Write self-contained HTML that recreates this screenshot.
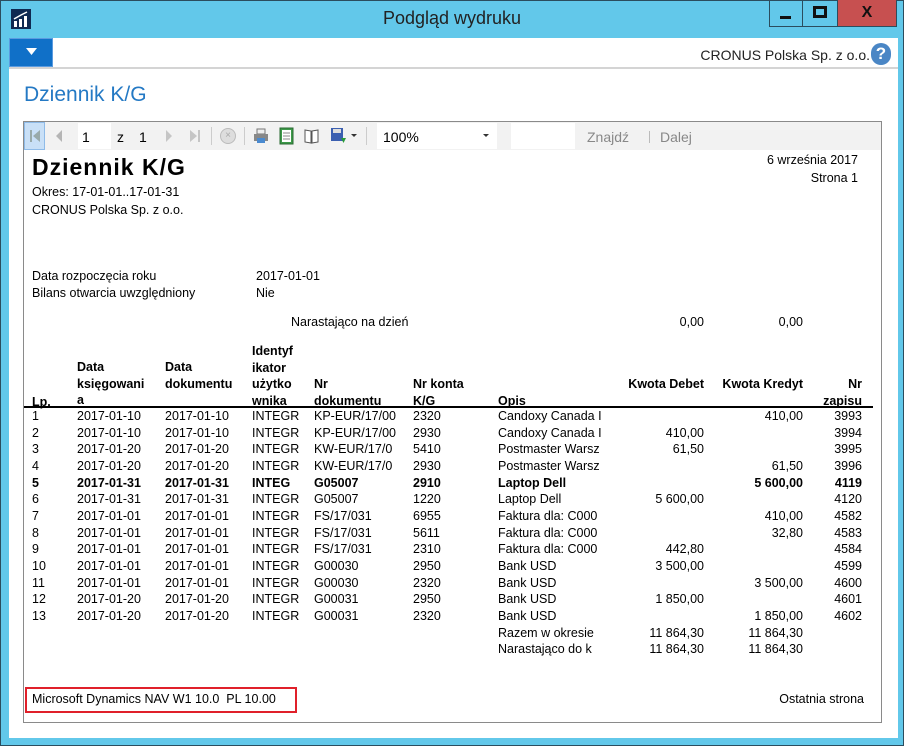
<!DOCTYPE html>
<html><head><meta charset="utf-8">
<style>
*{margin:0;padding:0;box-sizing:border-box}
body{width:904px;height:746px;overflow:hidden;background:#62c8ea;font-family:"Liberation Sans",sans-serif;position:relative;color:#000}
.a{position:absolute;white-space:nowrap}
.r{position:absolute;white-space:nowrap;text-align:right}
.t{font-size:12.5px;line-height:16px}
.b{font-weight:bold}
</style></head><body>
<div class="a" style="left:0;top:0;width:904px;height:746px;border:1px solid #2b4d5e"></div>
<div class="a" style="left:11px;top:9px;width:20px;height:20px;background:#0f2a52"></div>
<svg class="a" style="left:11px;top:9px" width="20" height="20"><rect x="3" y="12" width="3" height="6" fill="#fff"/><rect x="8" y="10" width="3" height="8" fill="#fff"/><rect x="13" y="7" width="3" height="11" fill="#fff"/><path d="M3 10 L10 6 L16 3" stroke="#fff" stroke-width="1.5" fill="none"/></svg>
<div class="a" style="left:0;width:904px;top:8px;text-align:center;font-size:18px;color:#222">Podgląd wydruku</div>
<div class="a" style="left:769px;top:0;width:34px;height:27px;border:1px solid #2b4d5e;border-top:none"></div>
<div class="a" style="left:780px;top:16px;width:11px;height:3px;background:#111"></div>
<div class="a" style="left:803px;top:0;width:34px;height:27px;border-bottom:1px solid #2b4d5e"></div>
<div class="a" style="left:813px;top:6px;width:14px;height:12px;border:3px solid #111"></div>
<div class="a" style="left:837px;top:0;width:60px;height:27px;background:#c75050;border:1px solid #2b4d5e;border-top:none;color:#111;font-size:16px;font-weight:bold;text-align:center;line-height:26px">X</div>
<div class="a" style="left:9px;top:38px;width:889px;height:700px;background:#fff"></div>
<div class="a" style="left:9px;top:38px;width:44px;height:29px;background:#1070c8;border:1px solid #5a9be0"></div>
<svg class="a" style="left:26px;top:48px" width="11" height="8"><path d="M0 0 L11 0 L5.5 7 Z" fill="#fff"/></svg>
<div class="a" style="left:9px;top:67px;width:889px;height:2px;background:#d4d4d4"></div>
<div class="a" style="right:34px;top:47px;font-size:14px;color:#222">CRONUS Polska Sp. z o.o.</div>
<div class="a" style="left:871px;top:43px;width:20px;height:22px;border-radius:10px;background:#4a86c5;color:#fff;font-weight:bold;font-size:17px;text-align:center;line-height:22px">?</div>
<div class="a" style="left:24px;top:83px;font-size:21px;color:#2479c4">Dziennik K/G</div>
<div class="a" style="left:23px;top:121px;width:859px;height:602px;border:1px solid #8a8a8a"></div>
<div class="a" style="left:24px;top:122px;width:857px;height:28px;background:#f2f2f2"></div>
<div class="a" style="left:24px;top:122px;width:21px;height:28px;background:#c9e0f7;border:1px solid #8fbbe8"></div>
<svg class="a" style="left:29px;top:129px" width="12" height="14"><rect x="1" y="1" width="2" height="12" fill="#9aa"/><path d="M11 1 L4 7 L11 13Z" fill="#9aa"/></svg>
<svg class="a" style="left:54px;top:129px" width="10" height="14"><path d="M8 1 L2 7 L8 13Z" fill="#b5b5b5"/></svg>
<div class="a" style="left:78px;top:123px;width:33px;height:26px;background:#fff"></div>
<div class="a t" style="left:82px;top:129px;font-size:14px">1</div>
<div class="a t" style="left:117px;top:129px;font-size:14px">z</div>
<div class="a t" style="left:139px;top:129px;font-size:14px">1</div>
<svg class="a" style="left:164px;top:129px" width="10" height="14"><path d="M2 1 L8 7 L2 13Z" fill="#c5c5c5"/></svg>
<svg class="a" style="left:189px;top:129px" width="12" height="14"><path d="M1 1 L8 7 L1 13Z" fill="#c5c5c5"/><rect x="9" y="1" width="2" height="12" fill="#c5c5c5"/></svg>
<div class="a" style="left:211px;top:127px;width:1px;height:18px;background:#ccc"></div>
<div class="a" style="left:220px;top:128px;width:16px;height:16px;border-radius:8px;background:#ddd;border:1px solid #bbb;color:#aaa;font-size:10px;text-align:center;line-height:14px">×</div>
<div class="a" style="left:244px;top:127px;width:1px;height:18px;background:#ccc"></div>
<svg class="a" style="left:252px;top:127px" width="18" height="18"><rect x="5" y="2" width="8" height="5" fill="#eee" stroke="#777"/><rect x="2" y="7" width="14" height="7" fill="#888"/><rect x="5" y="11" width="8" height="5" fill="#4a8ad0"/></svg>
<svg class="a" style="left:278px;top:127px" width="18" height="18"><rect x="2" y="1" width="13" height="16" fill="#3d9a4a" stroke="#2a6a33"/><rect x="4" y="3" width="9" height="12" fill="#fff"/><path d="M5 6H12M5 9H12M5 12H12" stroke="#888"/></svg>
<svg class="a" style="left:303px;top:127px" width="18" height="18"><path d="M2 3 L8 4 L8 16 L2 15Z M9 4 L15 3 L15 15 L9 16Z" fill="#fff" stroke="#555"/></svg>
<svg class="a" style="left:330px;top:127px" width="18" height="18"><rect x="1" y="1" width="12" height="13" fill="#3b5fb0"/><rect x="3" y="2" width="8" height="4" fill="#ddd"/><path d="M11 11 L16 11 L13.5 16Z" fill="#2a9a3a"/></svg>
<svg class="a" style="left:351px;top:134px" width="6" height="4"><path d="M0 0H6L3 3Z" fill="#333"/></svg>
<div class="a" style="left:366px;top:127px;width:1px;height:18px;background:#ccc"></div>
<div class="a" style="left:377px;top:123px;width:120px;height:26px;background:#fff"></div>
<div class="a t" style="left:383px;top:129px;font-size:14px">100%</div>
<svg class="a" style="left:483px;top:134px" width="6" height="4"><path d="M0 0H6L3 3Z" fill="#333"/></svg>
<div class="a" style="left:511px;top:123px;width:64px;height:26px;background:#fff"></div>
<div class="a t" style="left:587px;top:129px;font-size:14px;color:#888">Znajdź</div>
<div class="a" style="left:649px;top:131px;width:1px;height:12px;background:#bbb"></div>
<div class="a t" style="left:660px;top:129px;font-size:14px;color:#888">Dalej</div>

<div class="a b" style="left:32px;top:154px;font-size:23px;letter-spacing:1px">Dziennik K/G</div>
<div class="r t" style="right:46px;top:152px">6 września 2017</div>
<div class="r t" style="right:46px;top:170px">Strona 1</div>
<div class="a t" style="left:32px;top:184px">Okres: 17-01-01..17-01-31</div>
<div class="a t" style="left:32px;top:202px">CRONUS Polska Sp. z o.o.</div>
<div class="a t" style="left:32px;top:268px">Data rozpoczęcia roku</div>
<div class="a t" style="left:256px;top:268px">2017-01-01</div>
<div class="a t" style="left:32px;top:285px">Bilans otwarcia uwzględniony</div>
<div class="a t" style="left:256px;top:285px">Nie</div>
<div class="a t" style="left:291px;top:314px">Narastająco na dzień</div>
<div class="r t" style="right:200px;top:314px">0,00</div>
<div class="r t" style="right:101px;top:314px">0,00</div>

<div class="a t b" style="left:32px;top:394px">Lp.</div>
<div class="a t b" style="left:77px;top:359px;line-height:16.5px">Data<br>księgowani<br>a</div>
<div class="a t b" style="left:165px;top:359px;line-height:16.5px">Data<br>dokumentu</div>
<div class="a t b" style="left:252px;top:343px;line-height:16.5px">Identyf<br>ikator<br>użytko<br>wnika</div>
<div class="a t b" style="left:314px;top:376px;line-height:16.5px">Nr<br>dokumentu</div>
<div class="a t b" style="left:413px;top:376px;line-height:16.5px">Nr konta<br>K/G</div>
<div class="a t b" style="left:498px;top:393px">Opis</div>
<div class="r t b" style="right:200px;top:376px">Kwota Debet</div>
<div class="r t b" style="right:101px;top:376px">Kwota Kredyt</div>
<div class="r t b" style="right:42px;top:376px;line-height:16.5px">Nr<br>zapisu</div>
<div class="a" style="left:24px;top:406px;width:849px;height:2px;background:#000"></div>

<div class="a t" style="left:32px;top:408px;line-height:16.67px">1<br>2<br>3<br>4<br><b>5</b><br>6<br>7<br>8<br>9<br>10<br>11<br>12<br>13</div>
<div class="a t" style="left:77px;top:408px;line-height:16.67px">2017-01-10<br>2017-01-10<br>2017-01-20<br>2017-01-20<br><b>2017-01-31</b><br>2017-01-31<br>2017-01-01<br>2017-01-01<br>2017-01-01<br>2017-01-01<br>2017-01-01<br>2017-01-20<br>2017-01-20</div>
<div class="a t" style="left:165px;top:408px;line-height:16.67px">2017-01-10<br>2017-01-10<br>2017-01-20<br>2017-01-20<br><b>2017-01-31</b><br>2017-01-31<br>2017-01-01<br>2017-01-01<br>2017-01-01<br>2017-01-01<br>2017-01-01<br>2017-01-20<br>2017-01-20</div>
<div class="a t" style="left:252px;top:408px;line-height:16.67px">INTEGR<br>INTEGR<br>INTEGR<br>INTEGR<br><b>INTEG</b><br>INTEGR<br>INTEGR<br>INTEGR<br>INTEGR<br>INTEGR<br>INTEGR<br>INTEGR<br>INTEGR</div>
<div class="a t" style="left:314px;top:408px;line-height:16.67px">KP-EUR/17/00<br>KP-EUR/17/00<br>KW-EUR/17/0<br>KW-EUR/17/0<br><b>G05007</b><br>G05007<br>FS/17/031<br>FS/17/031<br>FS/17/031<br>G00030<br>G00030<br>G00031<br>G00031</div>
<div class="a t" style="left:413px;top:408px;line-height:16.67px">2320<br>2930<br>5410<br>2930<br><b>2910</b><br>1220<br>6955<br>5611<br>2310<br>2950<br>2320<br>2950<br>2320</div>
<div class="a t" style="left:498px;top:408px;line-height:16.67px">Candoxy Canada I<br>Candoxy Canada I<br>Postmaster Warsz<br>Postmaster Warsz<br><b>Laptop Dell</b><br>Laptop Dell<br>Faktura dla: C000<br>Faktura dla: C000<br>Faktura dla: C000<br>Bank USD<br>Bank USD<br>Bank USD<br>Bank USD<br>Razem w okresie<br>Narastająco do k</div>
<div class="r t" style="right:200px;top:408px;line-height:16.67px">&nbsp;<br>410,00<br>61,50<br>&nbsp;<br>&nbsp;<br>5 600,00<br>&nbsp;<br>&nbsp;<br>442,80<br>3 500,00<br>&nbsp;<br>1 850,00<br>&nbsp;<br>11 864,30<br>11 864,30</div>
<div class="r t" style="right:101px;top:408px;line-height:16.67px">410,00<br>&nbsp;<br>&nbsp;<br>61,50<br><b>5 600,00</b><br>&nbsp;<br>410,00<br>32,80<br>&nbsp;<br>&nbsp;<br>3 500,00<br>&nbsp;<br>1 850,00<br>11 864,30<br>11 864,30</div>
<div class="r t" style="right:42px;top:408px;line-height:16.67px">3993<br>3994<br>3995<br>3996<br><b>4119</b><br>4120<br>4582<br>4583<br>4584<br>4599<br>4600<br>4601<br>4602</div>

<div class="a" style="left:25px;top:687px;width:272px;height:26px;border:2px solid #e0202a"></div>
<div class="a t" style="left:32px;top:691px">Microsoft Dynamics NAV W1 10.0&nbsp; PL 10.00</div>
<div class="r t" style="right:40px;top:691px">Ostatnia strona</div>
</body></html>
